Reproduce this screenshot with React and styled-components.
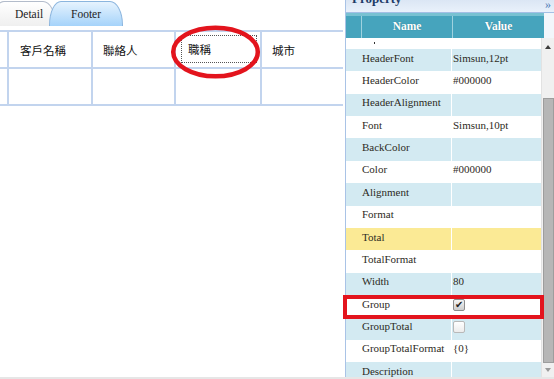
import React from 'react'
import styled, { createGlobalStyle } from 'styled-components'

const GlobalStyle = createGlobalStyle`
  html, body { margin: 0; padding: 0; background: #fff; }
  body { font-family: "Liberation Serif", serif; }
`

const Page = styled.div`
  width: 554px;
  height: 379px;
  display: flex;
  flex-direction: column;
  overflow: hidden;
`

const Main = styled.div`
  position: relative;
  flex: 1;
  min-height: 0;
  display: flex;
`

const BottomEdge = styled.div`
  height: 2px;
  background: #e6e6e6;
`

/* ---- report designer (left) ---- */

const Designer = styled.div`
  position: relative;
  width: 345px;
  padding-right: 2px;
  box-sizing: border-box;
  overflow: hidden;
`

const TabBar = styled.div`
  height: 30px;
  padding-top: 1px;
  box-sizing: border-box;
  display: flex;
  align-items: flex-start;
`

const Tab = styled.div`
  position: relative;
  z-index: ${p => (p.$active ? 2 : 1)};
  height: 25px;
  width: ${p => p.$width}px;
  margin-left: ${p => p.$offset}px;
  padding-left: ${p => p.$pad}px;
  box-sizing: border-box;
  display: flex;
  align-items: center;
  justify-content: ${p => (p.$pad ? 'flex-start' : 'center')};
  font-size: 11.5px;
  color: #222;
  border: 1px solid ${p => (p.$active ? '#8bb5de' : '#b3bccb')};
  border-bottom: none;
  border-radius: 12px 13px 0 0 / 24px 24px 0 0;
  background: ${p =>
    p.$active
      ? 'linear-gradient(#e6f3fe, #a5d3fa)'
      : 'linear-gradient(#ffffff, #efefef)'};
`

const Grid = styled.div`
  display: grid;
  grid-template-columns: 9px 84px 83px 86px 1fr;
  grid-auto-rows: 37px;
  border-top: 2px solid #c2d4ee;
`

const Cell = styled.div`
  display: flex;
  align-items: center;
  padding-left: ${p => p.$pad || 0}px;
  border-right: ${p => (p.$last ? 'none' : '2px solid #c2d4ee')};
  border-bottom: 2px solid #c2d4ee;
  font-family: "Noto Sans CJK TC", "Noto Sans", sans-serif;
  font-size: 11.5px;
  color: #111;
`

const FocusCell = styled(Cell)`
  padding: 3px 3px 4px 5px;
`

const FocusBox = styled.div`
  flex: 1;
  align-self: stretch;
  display: flex;
  align-items: center;
  padding-left: 6px;
  border: 1px dotted #555;
`

const Ellipse = styled.svg`
  position: absolute;
  left: 168px;
  top: 23px;
  width: 96px;
  height: 60px;
  pointer-events: none;
`

/* ---- property grid (right) ---- */

const Panel = styled.aside`
  width: 209px;
  display: flex;
  flex-direction: column;
  border-left: 1px solid #a9c3e6;
  box-sizing: border-box;
  background: #fff;
`

const TitleBar = styled.div`
  height: 13px;
  box-sizing: border-box;
  display: flex;
  justify-content: space-between;
  align-items: flex-start;
  padding: 0 3px 0 6px;
  overflow: hidden;
  background: linear-gradient(#dbe6f4, #e9f1fb);
  border-bottom: 1px solid #a3bfe5;
`

const Title = styled.span`
  margin-top: -9px;
  font-size: 13px;
  font-weight: bold;
  color: #1c3a66;
`

const Collapse = styled.span`
  margin-top: -3px;
  font-size: 12px;
  color: #4a78b5;
`

const HeadRow = styled.div`
  display: flex;
  height: 25px;
  background: #f2f6fb;
`

const HeadGrid = styled.div`
  width: 198px;
  display: grid;
  grid-template-columns: 15px 91px 1fr;
  background: #46a4bd;
  border-top: 3px solid #78c1d2;
  box-sizing: border-box;
`

const HeadCell = styled.div`
  display: flex;
  align-items: center;
  justify-content: center;
  padding-bottom: 2px;
  border-left: ${p => (p.$first ? 'none' : '1px solid #9fd2df')};
  color: #fff;
  font-size: 11.5px;
  font-weight: bold;
  text-shadow: 0 0 1px #2a7588;
`

const Body = styled.div`
  flex: 1;
  min-height: 0;
  display: flex;
`

const Rows = styled.div`
  width: 195px;
  overflow: hidden;
`

const RowList = styled.div`
  margin-top: ${p => p.$scroll}px;
`

const tones = {
  blue: '#d3eaf2',
  white: '#ffffff',
  yellow: '#fbea95',
}

const Row = styled.div`
  display: grid;
  grid-template-columns: 105px 1fr;
  height: 22.36px;
  background: ${p => tones[p.$tone]};
  font-size: 11px;
  color: #2d2a24;
`

const NameCell = styled.div`
  display: flex;
  align-items: center;
  padding: 0 0 5px 16px;
  white-space: nowrap;
`

const ValueCell = styled.div`
  display: flex;
  align-items: center;
  padding: 0 0 5px 1px;
  border-left: 1px solid #fff;
  white-space: nowrap;
`

const Dot = styled.span`
  width: 1px;
  height: 2px;
  margin: 0 0 0 12px;
  align-self: flex-end;
  background: #333;
`

const Check = styled.span`
  width: 12px;
  height: 12px;
  box-sizing: border-box;
  margin-top: 2px;
  border-radius: 2px;
  display: flex;
  align-items: center;
  justify-content: center;
  font-size: 10px;
  line-height: 1;
  color: #222;
  border: 1px solid ${p => (p.$checked ? '#8c8c8c' : '#b9b9b9')};
  background: ${p =>
    p.$checked
      ? 'linear-gradient(#f4f4f4, #cdcdcd)'
      : 'linear-gradient(#ffffff, #ececec)'};
`

const Scroll = styled.div`
  width: 13px;
  display: flex;
  flex-direction: column;
  align-items: center;
  background: #f0f0f0;
  border-left: 1px solid #e2e2e2;
  box-sizing: border-box;
`

const Arrow = styled.div`
  height: ${p => (p.$down ? 'auto' : '18px')};
  flex: ${p => (p.$down ? 1 : 'none')};
  display: flex;
  align-items: center;
  justify-content: center;
  &::before {
    content: '';
    border-left: 3.5px solid transparent;
    border-right: 3.5px solid transparent;
    ${p =>
      p.$down
        ? 'border-top: 4px solid #9a9a9a;'
        : 'border-bottom: 4px solid #3c3c3c;'}
  }
`

const Thumb = styled.div`
  width: 11px;
  height: 265px;
  margin-top: 42px;
  box-sizing: border-box;
  background: #b6b6b6;
  border: 1px solid #9d9d9d;
`

const Marker = styled.div`
  position: absolute;
  left: 343px;
  top: 295px;
  width: 201px;
  height: 24px;
  box-sizing: border-box;
  border: 4px solid #e3141d;
  pointer-events: none;
`

const columns = ['', '客戶名稱', '聯絡人', '職稱', '城市']

const properties = [
  { name: '', value: '', tone: 'white', clipped: true },
  { name: 'HeaderFont', value: 'Simsun,12pt', tone: 'blue' },
  { name: 'HeaderColor', value: '#000000', tone: 'white' },
  { name: 'HeaderAlignment', value: '', tone: 'blue' },
  { name: 'Font', value: 'Simsun,10pt', tone: 'white' },
  { name: 'BackColor', value: '', tone: 'blue' },
  { name: 'Color', value: '#000000', tone: 'white' },
  { name: 'Alignment', value: '', tone: 'blue' },
  { name: 'Format', value: '', tone: 'white' },
  { name: 'Total', value: '', tone: 'yellow' },
  { name: 'TotalFormat', value: '', tone: 'white' },
  { name: 'Width', value: '80', tone: 'blue' },
  { name: 'Group', check: true, tone: 'white' },
  { name: 'GroupTotal', check: false, tone: 'blue' },
  { name: 'GroupTotalFormat', value: '{0}', tone: 'white' },
  { name: 'Description', value: '', tone: 'blue' },
]

const pads = [0, 11, 10, 0, 10]

export default function App() {
  return (
    <Page>
      <GlobalStyle />
      <Main>
        <Designer>
          <TabBar>
            <Tab $width={64} $offset={-8} $pad={22}>Detail</Tab>
            <Tab $active $width={74} $offset={-7}>Footer</Tab>
          </TabBar>
          <Grid>
            {columns.map((c, i) =>
              i === 3 ? (
                <FocusCell key={i}>
                  <FocusBox>{c}</FocusBox>
                </FocusCell>
              ) : (
                <Cell key={i} $pad={pads[i]} $last={i === 4}>{c}</Cell>
              )
            )}
            {columns.map((c, i) => (
              <Cell key={'b' + i} $last={i === 4} />
            ))}
          </Grid>
          <Ellipse viewBox="0 0 96 60">
            <ellipse cx="47.5" cy="29" rx="42.3" ry="24.3" fill="none" stroke="#e3141d" strokeWidth="4.5" />
          </Ellipse>
        </Designer>

        <Panel>
          <TitleBar>
            <Title>Property</Title>
            <Collapse>»</Collapse>
          </TitleBar>
          <HeadRow>
            <HeadGrid>
              <HeadCell $first />
              <HeadCell>Name</HeadCell>
              <HeadCell>Value</HeadCell>
            </HeadGrid>
          </HeadRow>
          <Body>
            <Rows>
              <RowList $scroll={-11.36}>
                {properties.map((p, i) => (
                  <Row key={i} $tone={p.tone}>
                    <NameCell>{p.clipped ? <Dot /> : p.name}</NameCell>
                    <ValueCell>
                      {p.check === undefined ? p.value : (
                        <Check $checked={p.check}>{p.check ? '✔' : ''}</Check>
                      )}
                    </ValueCell>
                  </Row>
                ))}
              </RowList>
            </Rows>
            <Scroll>
              <Arrow />
              <Thumb />
              <Arrow $down />
            </Scroll>
          </Body>
        </Panel>
        <Marker />
      </Main>
      <BottomEdge />
    </Page>
  )
}
